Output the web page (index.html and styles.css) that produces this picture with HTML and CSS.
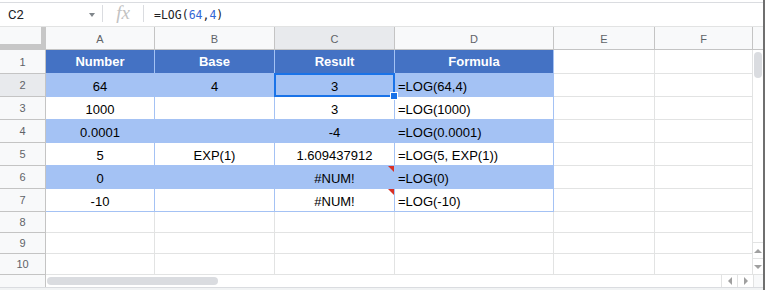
FILE: index.html
```html
<!DOCTYPE html>
<html lang="en">
<head>
    <meta charset="UTF-8">
    <meta name="viewport" content="width=device-width, initial-scale=1.0">
    <title>LOG function</title>
<link rel="stylesheet" href="styles.css">
</head>
<body>

<div class="window">

  <div class="formula-bar">
    <div class="name-box">
      <span>C2</span>
      <span class="caret"></span>
    </div>
    <div class="bar-sep"></div>
    <div class="fx">fx</div>
    <div class="bar-sep"></div>
    <div class="formula">=LOG(<span class="num">64</span>,<span class="num">4</span>)</div>
  </div>

  <div class="sheet">
    <!-- column headers -->
    <div class="corner"></div>
    <div class="ch">A</div>
    <div class="ch">B</div>
    <div class="ch active">C</div>
    <div class="ch">D</div>
    <div class="ch">E</div>
    <div class="ch">F</div>
    <div class="ch scroll-head"></div>

    <div class="vscroll">
      <div class="vthumb"></div>
      <div class="vbtns">
        <div class="sbtn"><span class="arrow up"></span></div>
        <div class="sbtn"><span class="arrow down"></span></div>
      </div>
    </div>

    <!-- row 1 -->
    <div class="rh">1</div>
    <div class="c t th">Number</div>
    <div class="c t th">Base</div>
    <div class="c t th">Result</div>
    <div class="c t th">Formula</div>
    <div class="c"></div>
    <div class="c"></div>

    <!-- row 2 -->
    <div class="rh active">2</div>
    <div class="c t band">64</div>
    <div class="c t band">4</div>
    <div class="c t band selected">3<span class="handle"></span></div>
    <div class="c t band left">=LOG(64,4)</div>
    <div class="c"></div>
    <div class="c"></div>

    <!-- row 3 -->
    <div class="rh">3</div>
    <div class="c t">1000</div>
    <div class="c t"></div>
    <div class="c t">3</div>
    <div class="c t left">=LOG(1000)</div>
    <div class="c"></div>
    <div class="c"></div>

    <!-- row 4 -->
    <div class="rh">4</div>
    <div class="c t band">0.0001</div>
    <div class="c t band"></div>
    <div class="c t band">-4</div>
    <div class="c t band left">=LOG(0.0001)</div>
    <div class="c"></div>
    <div class="c"></div>

    <!-- row 5 -->
    <div class="rh">5</div>
    <div class="c t">5</div>
    <div class="c t">EXP(1)</div>
    <div class="c t">1.609437912</div>
    <div class="c t left">=LOG(5, EXP(1))</div>
    <div class="c"></div>
    <div class="c"></div>

    <!-- row 6 -->
    <div class="rh">6</div>
    <div class="c t band">0</div>
    <div class="c t band"></div>
    <div class="c t band err">#NUM!</div>
    <div class="c t band left">=LOG(0)</div>
    <div class="c"></div>
    <div class="c"></div>

    <!-- row 7 -->
    <div class="rh">7</div>
    <div class="c t">-10</div>
    <div class="c t"></div>
    <div class="c t err">#NUM!</div>
    <div class="c t left">=LOG(-10)</div>
    <div class="c"></div>
    <div class="c"></div>

    <!-- empty rows -->
    <div class="rh">8</div>
    <div class="c"></div><div class="c"></div><div class="c"></div>
    <div class="c"></div><div class="c"></div><div class="c"></div>

    <div class="rh">9</div>
    <div class="c"></div><div class="c"></div><div class="c"></div>
    <div class="c"></div><div class="c"></div><div class="c"></div>

    <div class="rh">10</div>
    <div class="c"></div><div class="c"></div><div class="c"></div>
    <div class="c"></div><div class="c"></div><div class="c"></div>

    <!-- horizontal scrollbar -->
    <div class="hs-head"></div>
    <div class="hscroll">
      <div class="hthumb"></div>
      <div class="sbtn side"><span class="arrow left-arrow"></span></div>
      <div class="sbtn side"><span class="arrow right-arrow"></span></div>
    </div>
    <div class="hs-corner"></div>
  </div>

  <div class="tabs-edge"></div>

</div>

</body>
</html>
```

FILE: styles.css
```css
* { box-sizing: border-box }

body {
  margin: 0;
  font-family: "Liberation Sans", Arial, sans-serif;
  background: #fff;
}

.window {
  width: 765px;
  height: 290px;
  border-right: 2px solid #6f6f6f;
  overflow: hidden;
}

/* formula bar */

.formula-bar {
  display: flex;
  align-items: center;
  height: 25px;
  margin-top: 2px;
  border-top: 1px solid #dadce0;
  border-bottom: 1px solid #e2e3e3;
}

.name-box {
  width: 102px;
  display: flex;
  justify-content: space-between;
  align-items: center;
  padding: 0 7px 0 8px;
  font-family: Roboto, "Liberation Sans", sans-serif;
  font-size: 13px;
  color: #202124;
}

.caret {
  width: 0;
  height: 0;
  border-left: 3px solid transparent;
  border-right: 3px solid transparent;
  border-top: 4px solid #80868b;
}

.bar-sep {
  width: 1px;
  height: 17px;
  background: #dadce0;
  align-self: flex-start;
  margin-top: 2px;
}

.fx {
  width: 40px;
  text-align: center;
  font-family: "Liberation Serif", serif;
  font-style: italic;
  font-size: 19px;
  color: #c2c2c2;
  line-height: 20px;
  margin-top: -3px;
}

.formula {
  padding-left: 10px;
  font-family: "DejaVu Sans Mono", "Liberation Mono", monospace;
  font-size: 11.5px;
  color: #202124;
}

.formula .num {
  color: #3367d6;
}

/* grid */

.sheet {
  display: grid;
  grid-template-columns: 46px 109px 120px 120px 159px 101px 98px 10px;
  grid-template-rows: 23px 24px repeat(6, 23px) repeat(3, 21px) 12px;
}

.corner {
  background: #f8f9fa;
  border-right: 5px solid #c7c7c7;
  border-bottom: 6px solid #c7c7c7;
}

.ch,
.rh {
  display: flex;
  align-items: center;
  justify-content: center;
  background: #f8f9fa;
  color: #5f6368;
  font-size: 11px;
  border-right: 1px solid #c4c4c4;
  border-bottom: 1px solid #c4c4c4;
}

.ch {
  padding-top: 1px;
}

.ch.active,
.rh.active {
  background: #e8eaed;
}

.scroll-head {
  border-right: 0;
}

.c {
  display: flex;
  align-items: center;
  justify-content: center;
  padding-top: 2px;
  font-size: 13px;
  color: #000;
  border-right: 1px solid #e2e3e3;
  border-bottom: 1px solid #e2e3e3;
  white-space: nowrap;
}

.t {
  border-color: #a4c2f4;
}

.t.band {
  background: #a4c2f4;
}

.t.th {
  background: #4472c4;
  color: #fff;
  font-weight: bold;
  padding-top: 0;
}

.t.left {
  justify-content: flex-start;
  padding-left: 3px;
}

.selected {
  position: relative;
}

.selected::after {
  content: "";
  position: absolute;
  top: -1px;
  left: -1px;
  right: -1px;
  bottom: -1px;
  border: 2px solid #1a73e8;
}

.handle {
  position: absolute;
  right: -4px;
  bottom: -4px;
  width: 8px;
  height: 8px;
  background: #1a73e8;
  border: 1px solid #fff;
  z-index: 2;
}

.err {
  position: relative;
}

.err::before {
  content: "";
  position: absolute;
  top: 0;
  right: 0;
  border-left: 6px solid transparent;
  border-top: 6px solid #d93025;
}

/* scrollbars */

.vscroll {
  grid-column: 8;
  grid-row: 2 / 12;
  display: flex;
  flex-direction: column;
  justify-content: space-between;
  border-bottom: 1px solid #e2e3e3;
}

.vthumb {
  width: 8px;
  height: 26px;
  margin: 2px 0 0 1px;
  background: #dadce0;
  border-radius: 4px;
}

.sbtn {
  display: flex;
  align-items: center;
  justify-content: center;
  height: 16px;
  border-top: 1px solid #e2e3e3;
}

.sbtn.side {
  width: 16px;
  height: auto;
  border-top: 0;
  border-left: 1px solid #e2e3e3;
}

.arrow {
  width: 0;
  height: 0;
}

.arrow.up {
  border-left: 4px solid transparent;
  border-right: 4px solid transparent;
  border-bottom: 4px solid #a0a0a0;
}

.arrow.down {
  border-left: 4px solid transparent;
  border-right: 4px solid transparent;
  border-top: 4px solid #a0a0a0;
}

.arrow.left-arrow {
  border-top: 4px solid transparent;
  border-bottom: 4px solid transparent;
  border-right: 4px solid #a0a0a0;
}

.arrow.right-arrow {
  border-top: 4px solid transparent;
  border-bottom: 4px solid transparent;
  border-left: 4px solid #a0a0a0;
}

.hs-head {
  background: #f8f9fa;
  border-right: 1px solid #c4c4c4;
}

.hscroll {
  grid-column: 2 / 8;
  display: flex;
  align-items: stretch;
}

.hthumb {
  width: 171px;
  height: 8px;
  margin: 2px auto 0 1px;
  background: #dadce0;
  border-radius: 4px;
}

.hs-corner {
  background: #f8f9fa;
  border-left: 1px solid #e2e3e3;
}

.tabs-edge {
  height: 3px;
  border-top: 1px solid #dadce0;
  background: #f1f3f4;
}
```
